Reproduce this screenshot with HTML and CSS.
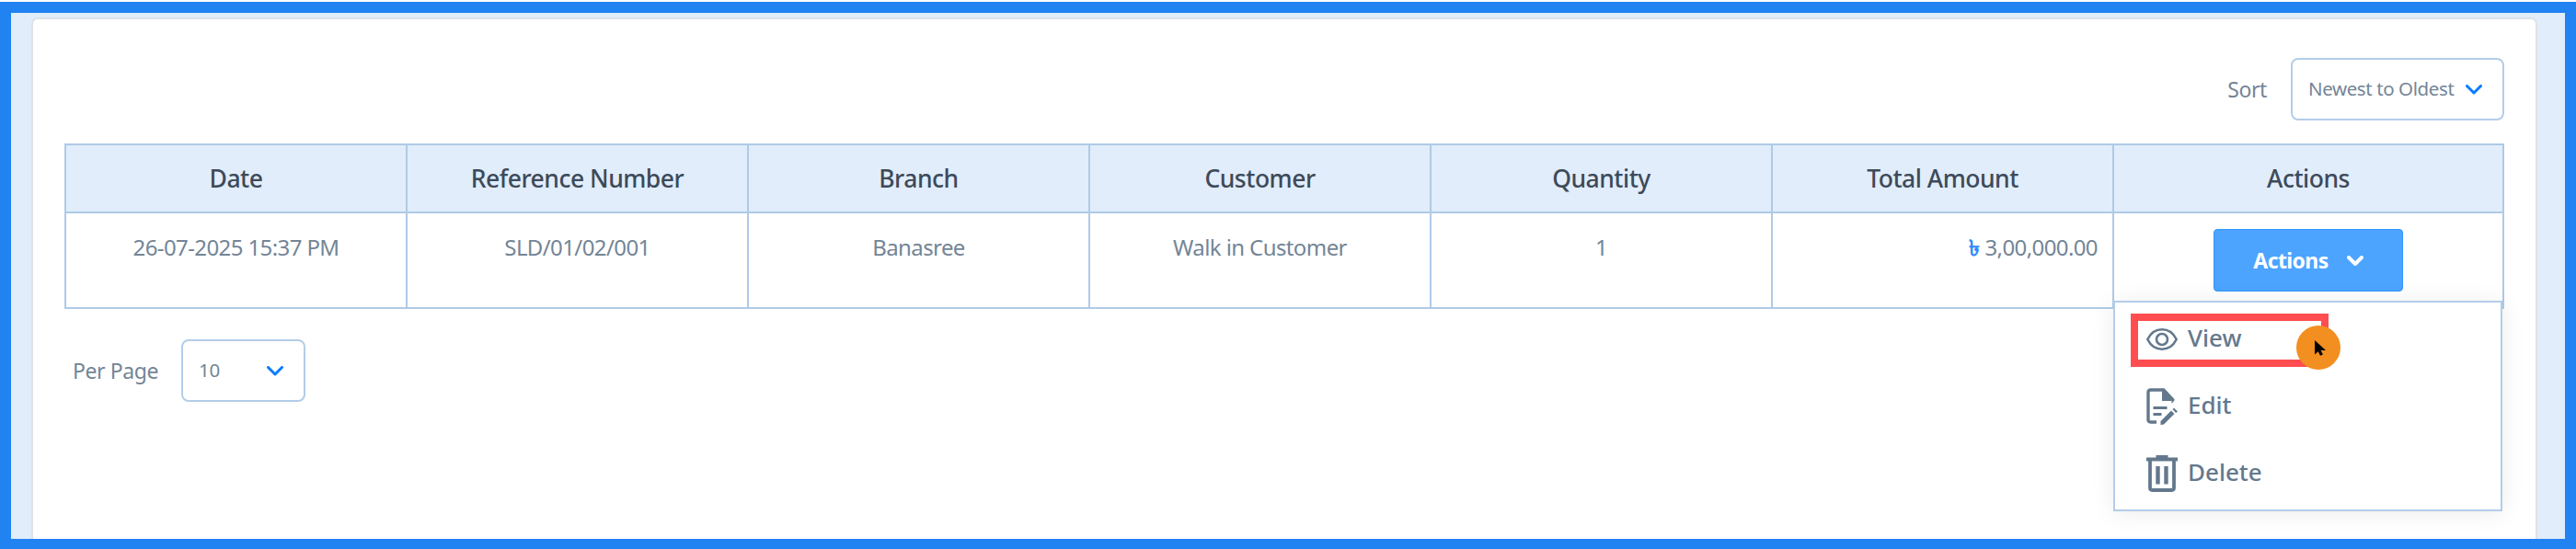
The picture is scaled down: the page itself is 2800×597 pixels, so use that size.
FILE: index.html
```html
<!DOCTYPE html>
<html lang="en">

<head>
    <meta charset="UTF-8">
    <title>Sales List</title>
    <link rel="stylesheet" href="styles.css">
</head>

<body>
    <div class="frame">
        <div class="card">
            <!-- sort -->
            <div class="toolbar">
                <span class="label">Sort</span>
                <div class="select select-sort">
                    <span>Newest to Oldest</span>
                    <svg class="chevron" width="18" height="11" viewBox="0 0 18 11"><path d="M1.5 1.5L9 9L16.5 1.5" /></svg>
                </div>
            </div>

            <table class="list">
                <colgroup>
                    <col span="6">
                    <col class="col-actions">
                </colgroup>
                <thead>
                    <tr>
                        <th>Date</th>
                        <th>Reference Number</th>
                        <th>Branch</th>
                        <th>Customer</th>
                        <th>Quantity</th>
                        <th>Total Amount</th>
                        <th>Actions</th>
                    </tr>
                </thead>
                <tbody>
                    <tr>
                        <td>26-07-2025 15:37 PM</td>
                        <td>SLD/01/02/001</td>
                        <td>Banasree</td>
                        <td>Walk in Customer</td>
                        <td>1</td>
                        <td class="amount"><span class="taka">৳</span> 3,00,000.00</td>
                        <td class="actions">
                            <div class="dropdown">
                                <button class="btn">
                                    <span>Actions</span>
                                    <svg class="chevron" width="18" height="11" viewBox="0 0 18 11"><path d="M2 2L9 9L16 2" /></svg>
                                </button>
                                <div class="menu">
                                    <div class="item">
                                        <svg width="34" height="24" viewBox="0 0 34 24" fill="none" stroke="#64788d" stroke-width="2.6">
                                            <path d="M1.3 12C4.500 5.500 10 1.300 17 1.300S29.500 5.500 32.700 12C29.500 18.500 24 22.700 17 22.700S4.500 18.500 1.300 12Z" />
                                            <circle cx="17" cy="12" r="6" />
                                        </svg>
                                        <span>View</span>
                                    </div>
                                    <div class="item">
                                        <svg width="34" height="40" viewBox="0 0 34 40">
                                            <path d="M11 37H4.500Q2 37 2 34.500V4.500Q2 2 4.500 2H18" fill="none" stroke="#64788d" stroke-width="3.400" />
                                            <path d="M17 0.300H19.500L30.500 12V13.500L27.500 17V14H17Z" fill="#64788d" />
                                            <path d="M7.500 21.500H22.500M7.500 28.500H16.500" stroke="#64788d" stroke-width="3" />
                                            <path d="M15.500 40V36L27 24.500L30.500 28L19 39.500ZM28.500 23L30 21.500L34 25.500L32 27Z" fill="#64788d" />
                                        </svg>
                                        <span>Edit</span>
                                    </div>
                                    <div class="item">
                                        <svg width="34" height="40" viewBox="0 0 34 40" fill="none" stroke="#64788d">
                                            <path d="M0 4.500H34" stroke-width="4" />
                                            <path d="M10.500 1.500H23.500" stroke-width="3" />
                                            <path d="M4 5V35.500Q4 38 6.500 38H27.500Q30 38 30 35.500V5" stroke-width="3.800" />
                                            <path d="M12.500 12V31.500M21.500 12V31.500" stroke-width="4.400" />
                                        </svg>
                                        <span>Delete</span>
                                    </div>
                                    <div class="highlight"></div>
                                    <div class="pointer">
                                        <svg width="12" height="17" viewBox="0 0 12 17"><path d="M0 0V15.500L3.700 12.200L6 16.800L8.900 15.400L6.600 11H12Z" /></svg>
                                    </div>
                                </div>
                            </div>
                        </td>
                    </tr>
                </tbody>
            </table>

            <!-- per page -->
            <div class="pager">
                <span class="label">Per Page</span>
                <div class="select select-page">
                    <span>10</span>
                    <svg class="chevron" width="18" height="11" viewBox="0 0 18 11"><path d="M1.5 1.5L9 9L16.5 1.5" /></svg>
                </div>
            </div>
        </div>
    </div>
</body>

</html>
```
FILE: styles.css
```css
* {
    box-sizing: border-box;
}

body {
    margin: 0;
    padding-top: 2px;
    height: 597px;
    overflow: hidden;
    background-color: white;
    font-family: "Noto Sans", sans-serif;
    color: #748596;
}

.frame {
    height: 595px;
    overflow: hidden;
    padding: 5px 30px 0 22px;
    background-color: #e1edfb;
    border: 12px solid #2182f2;
    border-bottom-width: 11px;
}

.card {
    height: 620px;
    padding: 42px 34px 0 34px;
    background-color: white;
    border: 2px solid #dfe2e6;
    border-radius: 7px;
}

.toolbar {
    display: flex;
    justify-content: flex-end;
    align-items: center;
    margin-bottom: 25px;
}

.label {
    font-size: 23px;
    letter-spacing: -0.4px;
    margin-bottom: 1px;
}

.select {
    display: flex;
    justify-content: space-between;
    align-items: center;
    height: 68px;
    padding: 0 22px 0 17px;
    border: 2px solid #b3cde9;
    border-radius: 8px;
    font-size: 20.5px;
    letter-spacing: -0.4px;
}

.select span {
    margin-bottom: 2px;
}

.select-sort {
    width: 232px;
    margin-left: 26px;
}

.select-page {
    width: 135px;
    margin-left: 25px;
}

.chevron path {
    fill: none;
    stroke: #0a7cff;
    stroke-width: 3;
    stroke-linejoin: round;
    stroke-linecap: round;
}

.list {
    width: 2652px;
    table-layout: fixed;
    border-collapse: collapse;
}

.list .col-actions {
    width: 424px;
}

.list th,
.list td {
    border: 2px solid #afcae6;
    text-align: center;
}

.list th {
    height: 74px;
    padding: 0 0 1px;
    background-color: #e1edfb;
    color: #3d4a59;
    font-size: 26.5px;
    font-weight: 550;
    letter-spacing: -0.5px;
    line-height: 36px;
}

.list td {
    height: 104px;
    padding: 19px 16px 0;
    font-size: 24px;
    letter-spacing: -0.6px;
    line-height: 36px;
    vertical-align: top;
}

.list .amount {
    text-align: right;
}

.taka {
    color: #2e89fb;
    font-weight: bold;
}

.list .actions {
    padding: 17px 0 0;
}

.dropdown {
    position: relative;
    display: flex;
    justify-content: center;
    letter-spacing: normal;
}

.btn {
    display: flex;
    justify-content: center;
    align-items: center;
    gap: 20px;
    width: 206px;
    height: 68px;
    padding: 0;
    background-color: #4ca4ff;
    border: 1px solid #3196ff;
    border-radius: 4px;
    color: white;
    font-family: inherit;
    font-size: 23px;
    font-weight: bold;
    letter-spacing: -0.6px;
}

.btn .chevron path {
    stroke: white;
    stroke-width: 4;
}

/* opened menu under the button */
.menu {
    position: absolute;
    top: 78px;
    left: 0;
    width: 423px;
    height: 229px;
    margin-left: -1px;
    padding-top: 4px;
    background-color: white;
    border: 2px solid #b3cde9;
    box-shadow: 0 2px 24px rgba(0, 0, 0, 0.08);
    color: #64788d;
}

.item {
    display: flex;
    align-items: center;
    gap: 11px;
    height: 72.67px;
    padding-left: 34px;
    font-size: 26px;
    font-weight: 500;
}

.item span {
    margin-bottom: 4px;
}

.highlight {
    position: absolute;
    top: 12px;
    left: 17px;
    width: 215px;
    height: 58px;
    border: 8px solid #ff4d50;
}

.pointer {
    position: absolute;
    top: 25px;
    left: 197px;
    width: 48px;
    height: 48px;
    padding: 16px 0 0 20px;
    border-radius: 50%;
    background-color: #f28f20;
    line-height: 0;
    text-align: left;
}

.pager {
    display: flex;
    align-items: center;
    margin: 33px 0 0 9px;
}
```
